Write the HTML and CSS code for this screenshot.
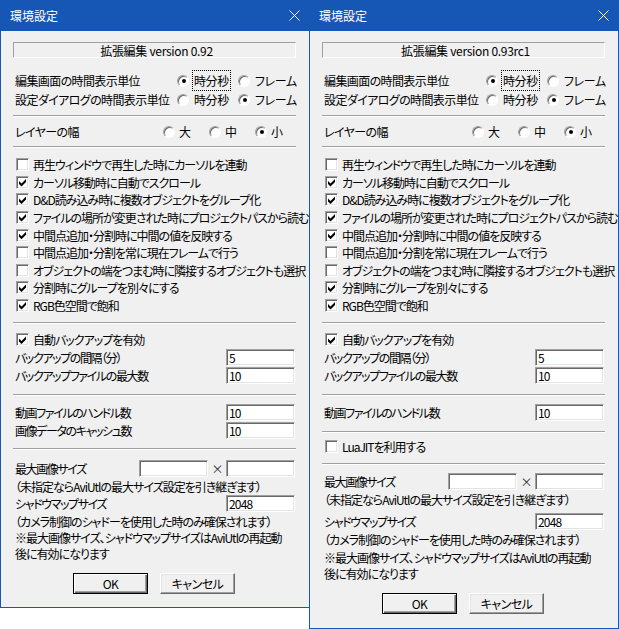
FILE: index.html
```html
<!DOCTYPE html>
<html lang="ja">
<head>
  <meta charset="UTF-8" />
  <title>環境設定</title>
  <link rel="stylesheet" href="styles.css">
</head>
<body>
  <div class="dialog">
    <div class="titlebar">
      <span class="title">環境設定</span>
      <svg class="close" width="11" height="11" viewBox="0 0 11 11"><path d="M0.5 0.5 L10.5 10.5 M10.5 0.5 L0.5 10.5" stroke="#fff" stroke-width="1" fill="none"/></svg>
    </div>
    <div class="client">
      <div class="version">拡張編集 version 0.92</div>
      <div class="radio-row">
        <span class="label">編集画面の時間表示単位</span>
        <span class="opt"><i class="radio on"></i><span class="focus">時分秒</span></span>
        <span class="opt"><i class="radio"></i>フレーム</span>
      </div>
      <div class="radio-row">
        <span class="label">設定ダイアログの時間表示単位</span>
        <span class="opt"><i class="radio"></i>時分秒</span>
        <span class="opt"><i class="radio on"></i>フレーム</span>
      </div>
      <div class="sep"></div>
      <div class="radio-row layer-row">
        <span class="label">レイヤーの幅</span>
        <span class="opt"><i class="radio"></i>大</span>
        <span class="opt"><i class="radio"></i>中</span>
        <span class="opt"><i class="radio on"></i>小</span>
      </div>
      <div class="sep"></div>
      <div class="checks">
        <div class="check-row"><i class="check"></i>再生ウィンドウで再生した時にカーソルを連動</div>
        <div class="check-row"><i class="check on"></i>カーソル移動時に自動でスクロール</div>
        <div class="check-row"><i class="check on"></i>D&amp;D読み込み時に複数オブジェクトをグループ化</div>
        <div class="check-row"><i class="check on"></i>ファイルの場所が変更された時にプロジェクトパスから読む</div>
        <div class="check-row"><i class="check on"></i>中間点追加・分割時に中間の値を反映する</div>
        <div class="check-row"><i class="check"></i>中間点追加・分割を常に現在フレームで行う</div>
        <div class="check-row"><i class="check"></i>オブジェクトの端をつまむ時に隣接するオブジェクトも選択</div>
        <div class="check-row"><i class="check on"></i>分割時にグループを別々にする</div>
        <div class="check-row"><i class="check on"></i>RGB色空間で飽和</div>
      </div>
      <div class="sep after-checks"></div>
      <div class="check-row backup-row"><i class="check on"></i>自動バックアップを有効</div>
      <div class="edit-row"><span class="label">バックアップの間隔（分）</span><input class="edit" type="text" value="5"></div>
      <div class="edit-row"><span class="label">バックアップファイルの最大数</span><input class="edit" type="text" value="10"></div>
      <div class="sep after-edits"></div>
      <div class="edit-row first"><span class="label">動画ファイルのハンドル数</span><input class="edit" type="text" value="10"></div>
      <div class="edit-row"><span class="label">画像データのキャッシュ数</span><input class="edit" type="text" value="10"></div>
      <div class="sep"></div>
      <div class="edit-row size-row">
        <span class="label">最大画像サイズ</span>
        <input class="edit" type="text" value="">
        <span class="times">×</span>
        <input class="edit" type="text" value="">
      </div>
      <div class="note-row">（未指定ならAviUtlの最大サイズ設定を引き継ぎます）</div>
      <div class="edit-row"><span class="label">シャドウマップサイズ</span><input class="edit" type="text" value="2048"></div>
      <div class="note-row">（カメラ制御のシャドーを使用した時のみ確保されます）</div>
      <div class="note-block">※最大画像サイズ、シャドウマップサイズはAviUtlの再起動<br>後に有効になります</div>
      <div class="buttons">
        <button class="btn default">OK</button>
        <button class="btn">キャンセル</button>
      </div>
    </div>
  </div>

  <div class="dialog dialog-new">
    <div class="titlebar">
      <span class="title">環境設定</span>
      <svg class="close" width="11" height="11" viewBox="0 0 11 11"><path d="M0.5 0.5 L10.5 10.5 M10.5 0.5 L0.5 10.5" stroke="#fff" stroke-width="1" fill="none"/></svg>
    </div>
    <div class="client">
      <div class="version">拡張編集 version 0.93rc1</div>
      <div class="radio-row">
        <span class="label">編集画面の時間表示単位</span>
        <span class="opt"><i class="radio on"></i><span class="focus">時分秒</span></span>
        <span class="opt"><i class="radio"></i>フレーム</span>
      </div>
      <div class="radio-row">
        <span class="label">設定ダイアログの時間表示単位</span>
        <span class="opt"><i class="radio"></i>時分秒</span>
        <span class="opt"><i class="radio on"></i>フレーム</span>
      </div>
      <div class="sep"></div>
      <div class="radio-row layer-row">
        <span class="label">レイヤーの幅</span>
        <span class="opt"><i class="radio"></i>大</span>
        <span class="opt"><i class="radio"></i>中</span>
        <span class="opt"><i class="radio on"></i>小</span>
      </div>
      <div class="sep"></div>
      <div class="checks">
        <div class="check-row"><i class="check"></i>再生ウィンドウで再生した時にカーソルを連動</div>
        <div class="check-row"><i class="check on"></i>カーソル移動時に自動でスクロール</div>
        <div class="check-row"><i class="check on"></i>D&amp;D読み込み時に複数オブジェクトをグループ化</div>
        <div class="check-row"><i class="check on"></i>ファイルの場所が変更された時にプロジェクトパスから読む</div>
        <div class="check-row"><i class="check on"></i>中間点追加・分割時に中間の値を反映する</div>
        <div class="check-row"><i class="check"></i>中間点追加・分割を常に現在フレームで行う</div>
        <div class="check-row"><i class="check"></i>オブジェクトの端をつまむ時に隣接するオブジェクトも選択</div>
        <div class="check-row"><i class="check on"></i>分割時にグループを別々にする</div>
        <div class="check-row"><i class="check on"></i>RGB色空間で飽和</div>
      </div>
      <div class="sep after-checks"></div>
      <div class="check-row backup-row"><i class="check on"></i>自動バックアップを有効</div>
      <div class="edit-row"><span class="label">バックアップの間隔（分）</span><input class="edit" type="text" value="5"></div>
      <div class="edit-row"><span class="label">バックアップファイルの最大数</span><input class="edit" type="text" value="10"></div>
      <div class="sep after-edits"></div>
      <div class="edit-row first"><span class="label">動画ファイルのハンドル数</span><input class="edit" type="text" value="10"></div>
      <div class="sep after-edits"></div>
      <div class="check-row lua-row"><i class="check"></i>LuaJITを利用する</div>
      <div class="sep after-lua"></div>
      <div class="edit-row size-row new-size">
        <span class="label">最大画像サイズ</span>
        <input class="edit" type="text" value="">
        <span class="times">×</span>
        <input class="edit" type="text" value="">
      </div>
      <div class="note-row">（未指定ならAviUtlの最大サイズ設定を引き継ぎます）</div>
      <div class="edit-row shadow-row"><span class="label">シャドウマップサイズ</span><input class="edit" type="text" value="2048"></div>
      <div class="note-row">（カメラ制御のシャドーを使用した時のみ確保されます）</div>
      <div class="note-block new-note">※最大画像サイズ、シャドウマップサイズはAviUtlの再起動<br>後に有効になります</div>
      <div class="buttons">
        <button class="btn default">OK</button>
        <button class="btn">キャンセル</button>
      </div>
    </div>
  </div>
</body>
</html>
```

FILE: styles.css
```css
body {
  margin: 0;
  background: #fff;
  display: flex;
  align-items: flex-start;
  font-family: "Noto Sans CJK JP", sans-serif;
  font-size: 12px;
  font-feature-settings: "palt" 1;
  letter-spacing: -1px;
  color: #000;
}
.dialog {
  width: 310px;
  box-sizing: border-box;
  border: 1px solid #1656b5;
  background: #f0f0f0;
  white-space: nowrap;
}
.dialog-new {
  margin-left: -1px;
}
.titlebar {
  height: 30px;
  background: #1656b5;
  color: #fff;
  display: flex;
  align-items: center;
  justify-content: space-between;
  padding: 0 9px 1px 9px;
  box-sizing: border-box;
}
.title {
  font-size: 12px;
  letter-spacing: 0;
}
.client {
  padding: 11px 13px 13px 12px;
}
.dialog-new .client {
  padding-bottom: 14px;
}
.version {
  height: 16px;
  box-sizing: border-box;
  border: 1px solid;
  border-color: #a0a0a0 #fff #fff #a0a0a0;
  margin-bottom: 13px;
  display: flex;
  align-items: center;
  justify-content: center;
  padding-left: 4px;
  letter-spacing: -0.3px;
}
.sep {
  height: 0;
  border-top: 1px solid #a0a0a0;
  border-bottom: 1px solid #fff;
  margin-top: 6px;
}
.radio-row {
  height: 19px;
  display: flex;
  align-items: center;
  padding-left: 2px;
}
.radio-row .label {
  flex: 0 0 162px;
  letter-spacing: -0.6px;
}
.radio-row .opt {
  flex: 0 0 61px;
  display: flex;
  align-items: center;
  gap: 5px;
  letter-spacing: -0.4px;
}
.layer-row {
  margin-top: 5px;
}
.layer-row .label {
  flex-basis: 148px;
}
.layer-row .opt {
  flex-basis: 46px;
  gap: 4px;
}
.layer-row + .sep {
  margin-top: 5px;
}
.radio {
  width: 12px;
  height: 12px;
  box-sizing: border-box;
  border-radius: 50%;
  background: #fff;
  border: 1px solid;
  border-color: #a0a0a0 #fff #fff #a0a0a0;
  box-shadow: inset 1px 1px #696969;
  display: grid;
  place-items: center;
  flex: none;
}
.radio.on::after {
  content: "";
  width: 4px;
  height: 4px;
  border-radius: 50%;
  background: #000;
  margin: 1px 0 0 1px;
}
.focus {
  outline: 1px dotted #000;
  outline-offset: 1px;
}
.checks {
  margin-top: 8px;
}
.check-row {
  height: 17.6px;
  display: flex;
  align-items: center;
  gap: 4px;
  padding-left: 3px;
}
.check {
  width: 13px;
  height: 13px;
  box-sizing: border-box;
  background: #fff;
  border: 1px solid;
  border-color: #a0a0a0 #fff #fff #a0a0a0;
  box-shadow: inset 1px 1px #696969, inset -1px -1px #e3e3e3;
  display: grid;
  flex: none;
}
.check.on::after {
  content: "";
  background: #000;
  clip-path: polygon(2px 4px, 4.5px 6.5px, 9px 2px, 9px 5px, 4.5px 9.5px, 2px 7px);
}
.sep.after-checks {
  margin-top: 7.6px;
}
.backup-row {
  height: 18px;
  margin-top: 7px;
}
.edit-row {
  height: 18px;
  display: flex;
  align-items: center;
  padding-left: 2px;
}
.edit-row .label {
  flex: 1;
  letter-spacing: -1.4px;
}
.edit {
  width: 69px;
  height: 17px;
  box-sizing: border-box;
  margin: 0 1px 0 0;
  padding: 0 2px;
  border: 1px solid;
  border-color: #a0a0a0 #fff #fff #a0a0a0;
  box-shadow: inset 1px 1px #696969, inset -1px -1px #e3e3e3;
  background: #fff;
  font: inherit;
  font-feature-settings: "palt" 1;
  letter-spacing: -0.8px;
  color: #000;
  outline: none;
}
.sep.after-edits {
  margin-top: 9px;
}
.edit-row.first {
  margin-top: 8px;
}
.sep.after-edits + .edit-row + .edit-row + .sep {
  margin-top: 8px;
}
.size-row {
  margin-top: 10px;
}
.size-row .label {
  flex: 0 0 124px;
}
.size-row .edit {
  margin: 0;
}
.times {
  flex: 1;
  text-align: center;
  color: #333;
}
.size-row .edit:last-child {
  margin-right: 1px;
}
.note-row {
  height: 17px;
  display: flex;
  align-items: center;
  padding-left: 2px;
}
.note-block {
  line-height: 16px;
  padding-left: 2px;
}
.buttons {
  margin-top: 11px;
  display: flex;
  justify-content: center;
  gap: 12px;
  padding-right: 1px;
}
.btn {
  width: 75px;
  height: 21px;
  box-sizing: border-box;
  background: #f0f0f0;
  border: 1px solid;
  border-color: #fff #696969 #696969 #fff;
  box-shadow: inset -1px -1px #a0a0a0, inset 1px 1px #e3e3e3;
  font: inherit;
  font-feature-settings: "palt" 1;
  letter-spacing: -0.5px;
  color: #000;
  padding: 0;
}
.btn.default {
  border-color: #000;
  box-shadow: inset 1px 1px #fff, inset -1px -1px #696969, inset -2px -2px #a0a0a0;
}
.lua-row {
  height: 18px;
  margin-top: 5px;
}
.sep.after-lua {
  margin-top: 7px;
}
.new-size {
  margin-top: 8px;
}
.shadow-row {
  margin-top: 5px;
}
.new-note {
  margin-top: 2px;
}
```
